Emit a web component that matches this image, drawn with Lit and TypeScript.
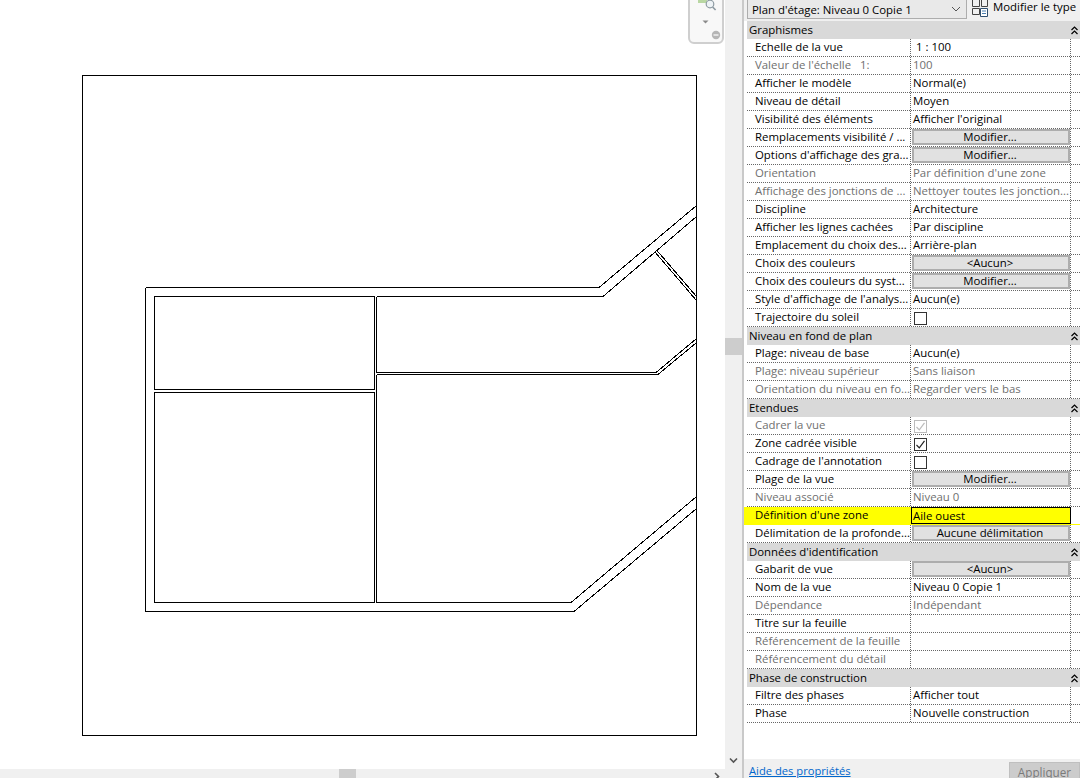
import { LitElement, html, css, svg } from "lit";
import { customElement } from "lit/decorators.js";

type Row = { l: string; v?: string; t?: "text" | "btn" | "check" | "hl"; dim?: boolean; checked?: boolean };
type Section = { title: string; rows: Row[] };

const sections: Section[] = [
  { title: "Graphismes", rows: [
    { l: "Echelle de la vue", v: "\u00a01 : 100" },
    { l: "Valeur de l'échelle\u00a0\u00a0\u00a01:", v: "100", dim: true },
    { l: "Afficher le modèle", v: "Normal(e)" },
    { l: "Niveau de détail", v: "Moyen" },
    { l: "Visibilité des éléments", v: "Afficher l'original" },
    { l: "Remplacements visibilité / ...", v: "Modifier...", t: "btn" },
    { l: "Options d'affichage des gra...", v: "Modifier...", t: "btn" },
    { l: "Orientation", v: "Par définition d'une zone", dim: true },
    { l: "Affichage des jonctions de ...", v: "Nettoyer toutes les jonction...", dim: true },
    { l: "Discipline", v: "Architecture" },
    { l: "Afficher les lignes cachées", v: "Par discipline" },
    { l: "Emplacement du choix des...", v: "Arrière-plan" },
    { l: "Choix des couleurs", v: "<Aucun>", t: "btn" },
    { l: "Choix des couleurs du syst...", v: "Modifier...", t: "btn" },
    { l: "Style d'affichage de l'analys...", v: "Aucun(e)" },
    { l: "Trajectoire du soleil", t: "check" },
  ]},
  { title: "Niveau en fond de plan", rows: [
    { l: "Plage: niveau de base", v: "Aucun(e)" },
    { l: "Plage: niveau supérieur", v: "Sans liaison", dim: true },
    { l: "Orientation du niveau en fo...", v: "Regarder vers le bas", dim: true },
  ]},
  { title: "Etendues", rows: [
    { l: "Cadrer la vue", t: "check", checked: true, dim: true },
    { l: "Zone cadrée visible", t: "check", checked: true },
    { l: "Cadrage de l'annotation", t: "check" },
    { l: "Plage de la vue", v: "Modifier...", t: "btn" },
    { l: "Niveau associé", v: "Niveau 0", dim: true },
    { l: "Définition d'une zone", v: "Aile ouest", t: "hl" },
    { l: "Délimitation de la profonde...", v: "Aucune délimitation", t: "btn" },
  ]},
  { title: "Données d'identification", rows: [
    { l: "Gabarit de vue", v: "<Aucun>", t: "btn" },
    { l: "Nom de la vue", v: "Niveau 0 Copie 1" },
    { l: "Dépendance", v: "Indépendant", dim: true },
    { l: "Titre sur la feuille", v: "" },
    { l: "Référencement de la feuille", v: "", dim: true },
    { l: "Référencement du détail", v: "", dim: true },
  ]},
  { title: "Phase de construction", rows: [
    { l: "Filtre des phases", v: "Afficher tout" },
    { l: "Phase", v: "Nouvelle construction" },
  ]},
];

const planLines = [
  "M145.5 287.5H599L696 206",
  "M145.5 287.5V611.5H574L696 509",
  "M603 296.5L696 217",
  "M154.5 296.5H374.5V389.5H154.5Z",
  "M154.5 392.5H374.5V602.5H154.5Z",
  "M376.5 296.5H603",
  "M376.5 296.5V372.5H656L696 339",
  "M376.5 374.5H658L696 343",
  "M376.5 374.5V602.5H571L696 497",
  "M655 252L696 300",
  "M657 250.5L696 296",
];

@customElement("app-root")
export class AppRoot extends LitElement {
  static styles = css`
    :host {
      display: flex;
      width: 1080px;
      height: 778px;
      overflow: hidden;
      background: #fff;
      font-family: "Open Sans", "Noto Sans", "Liberation Sans", sans-serif;
      font-size: 11.4px;
      color: #000;
    }
    .view { width: 742px; height: 778px; display: flex; flex-direction: column; flex: none; background: #f0f0f0; }
    .view-main { height: 769px; display: flex; }
    .canvas { width: 725px; height: 769px; position: relative; background: #fff; overflow: hidden; flex: none; }
    .plan { display: block; width: 725px; height: 769px; }
    .plan path, .plan rect { fill: none; stroke: #000; stroke-width: 1; }
    .plan .frame { shape-rendering: crispEdges; }
    .plan path { shape-rendering: crispEdges; }
    .nav {
      position: absolute; left: 688px; top: -12px; width: 36px; height: 56px; box-sizing: border-box;
      border: 2px solid #cfcfcf; border-radius: 6px; background: #f8f8f8;
    }
    .nav svg { position: absolute; left: 0; top: 0; }
    .vscroll { flex: 1; display: flex; flex-direction: column; align-items: stretch; padding-top: 338px; box-sizing: border-box; }
    .thumb-v { height: 17px; background: #cdcdcd; }
    .arrow-down { margin-top: auto; display: flex; justify-content: center; padding-bottom: 5px; }
    .hscroll { height: 9px; display: flex; position: relative; }
    .hs-track { width: 725px; display: flex; padding-left: 339px; box-sizing: border-box; position: relative; }
    .thumb-h { width: 17px; height: 9px; background: #cdcdcd; }
    .arrow-right { margin-left: auto; padding-right: 5px; }
    .split { width: 2px; flex: none; background: #c9c9c9; }
    .panel { width: 336px; flex: none; display: flex; flex-direction: column; height: 778px; padding-left: 3px; box-sizing: border-box; background: #fff; }
    .top { height: 21px; flex: none; display: flex; background: #f0f0f0; margin-left: -3px; padding-left: 3px; }
    .combo {
      width: 220px; height: 19px; box-sizing: border-box; background: #e9e9e9; border: 1px solid #adadad; border-top: none;
      display: flex; align-items: center; padding: 0 5px 0 4px; justify-content: space-between; flex: none;
    }
    .modtype { display: flex; align-items: flex-start; gap: 4px; margin-left: 5px; white-space: nowrap; }
    .modtype span { line-height: 14px; }
    .list { flex: 1; background: #fff; }
    .sec {
      height: 18px; background: #d9d9d9; display: flex; align-items: center; justify-content: space-between;
      padding: 0 2px 0 2px; box-sizing: border-box;
    }
    .sec span { line-height: 16px; }
    .row {
      display: grid; grid-template-columns: 164px 160px 1fr; height: 18px; box-sizing: border-box;
      border-bottom: 1px dotted #666;
    }
    .cell {
      display: flex; align-items: center; white-space: nowrap; overflow: hidden; box-sizing: border-box;
      border-right: 1px dotted #666; height: 17px; padding-bottom: 2px;
    }
    .lab { padding-left: 8px; }
    .val { padding-left: 2px; }
    .dim { color: #6f6f6f; }
    .val.has-btn { padding: 0 0 0 2px; overflow: visible; align-items: flex-start; }
    .btn {
      flex: 1; height: 16px; margin-left: -1px; padding: 0 2px 1px 0; box-sizing: border-box; background: #e1e1e1; border: 2px solid #adadad;
      display: flex; align-items: center; justify-content: center;
    }
    .val.has-check { padding: 2px 0 0 2px; }
    .box { width: 13px; height: 13px; box-sizing: border-box; border: 1px solid #333; background: #fff; margin-left: 1px; display: flex; }
    .box.dim { border-color: #bcbcbc; }
    .row.hl { background: #ffff00; margin-left: -3px; grid-template-columns: 167px 160px 1fr; border-bottom: 1px solid transparent; }
    .row.hl .lab { padding-left: 11px; border-right: none; }
    .row.hl .val { border: 1px solid #000; padding-left: 1px; padding-bottom: 1px; }
    .row.hl .rest { background: #fff; }
    .rest { border: none; }
    .foot {
      height: 19px; flex: none; background: #f0f0f0; display: flex; justify-content: space-between; align-items: flex-start;
      margin-left: -3px; padding-left: 5px;
    }
    .link { color: #0066cc; text-decoration: underline; margin-top: 4px; line-height: 16px; font-size: 11.2px; }
    .apply {
      width: 71px; height: 17px; margin-top: 3px; box-sizing: border-box; background: #cccccc; border: 1px solid #bfbfbf; border-bottom: none;
      color: #7a7a7a; text-align: center; line-height: 18px; font-size: 11.7px;
    }
  `;

  private chev() {
    return html`<svg width="7" height="9" viewBox="0 0 7 9"><path d="M.5 4 3.5 1 6.5 4M.5 8 3.5 5 6.5 8" fill="none" stroke="#000" stroke-width="1.2"/></svg>`;
  }

  private renderVal(r: Row) {
    if (r.t === "btn") return html`<div class="cell val has-btn"><div class="btn">${r.v}</div></div>`;
    if (r.t === "check")
      return html`<div class="cell val has-check"><div class="box ${r.dim ? "dim" : ""}">${r.checked
        ? html`<svg width="11" height="11" viewBox="0 0 11 11"><path d="M1.5 6 4.3 8.8 9.5 1.8" fill="none" stroke=${r.dim ? "#bcbcbc" : "#222"} stroke-width="1.2"/></svg>`
        : ""}</div></div>`;
    return html`<div class="cell val ${r.dim ? "dim" : ""}">${r.v}</div>`;
  }

  render() {
    return html`
      <div class="view">
        <div class="view-main">
          <div class="canvas">
            <svg class="plan" viewBox="0 0 725 769">
              <rect class="frame" x="82.5" y="75.5" width="614" height="660"></rect>
              ${planLines.map((d) => svg`<path d=${d}></path>`)}
            </svg>
            <div class="nav">
              <svg width="32" height="52" viewBox="0 0 32 52">
                <path d="M8 5h9v8H8z" fill="#b9d7a3"/>
                <circle cx="20" cy="14" r="3.8" fill="#eef3f6" stroke="#8d9aa2" stroke-width="1.2"/>
                <path d="M22.6 17l3 3" stroke="#8d9aa2" stroke-width="1.6"/>
                <path d="M12.5 30.5h6l-3 3z" fill="#8a8a8a"/>
                <circle cx="26" cy="45" r="4.2" fill="#b5b5b5"/>
                <path d="M23.5 45h5" stroke="#f4f4f4" stroke-width="1.4"/>
              </svg>
            </div>
          </div>
          <div class="vscroll">
            <div class="thumb-v"></div>
            <div class="arrow-down">
              <svg width="9" height="7" viewBox="0 0 9 7"><path d="M1 1.5 4.5 5 8 1.5" fill="none" stroke="#555" stroke-width="1.6"/></svg>
            </div>
          </div>
        </div>
        <div class="hscroll">
          <div class="hs-track">
            <div class="thumb-h"></div>
            <div class="arrow-right">
              <svg width="6" height="9" viewBox="0 0 6 9"><path d="M1 1 4.5 4.5 1 8" fill="none" stroke="#555" stroke-width="1.6"/></svg>
            </div>
          </div>
        </div>
      </div>
      <div class="split"></div>
      <div class="panel">
        <div class="top">
          <div class="combo">
            <span>Plan d'étage: Niveau 0 Copie 1</span>
            <svg width="10" height="6" viewBox="0 0 10 6"><path d="M1 1 5 5 9 1" fill="none" stroke="#555" stroke-width="1"/></svg>
          </div>
          <div class="modtype">
            <svg width="17" height="17" viewBox="0 0 17 17" style="flex:none">
              <path d="M.5 0V6.5H7.5V0M.5 8.5H7.5V14.5H.5ZM9.5 0V6.5H15.5V0" fill="none" stroke="#444"/>
              <path d="M8.5 8.5H15.5V16.5H8.5Z" fill="#fff" stroke="#2f4f6f"/>
              <path d="M10 11h4M10 13.5h4" stroke="#4a7fb0"/>
            </svg>
            <span>Modifier le type</span>
          </div>
        </div>
        <div class="list">
          ${sections.map(
            (s) => html`
              <div class="sec"><span>${s.title}</span>${this.chev()}</div>
              ${s.rows.map(
                (r) => html`
                  <div class="row ${r.t === "hl" ? "hl" : ""}">
                    <div class="cell lab ${r.dim ? "dim" : ""}">${r.l}</div>
                    ${this.renderVal(r)}
                    <div class="cell rest"></div>
                  </div>
                `
              )}
            `
          )}
        </div>
        <div class="foot">
          <span class="link">Aide des propriétés</span>
          <div class="apply">Appliquer</div>
        </div>
      </div>
    `;
  }
}
